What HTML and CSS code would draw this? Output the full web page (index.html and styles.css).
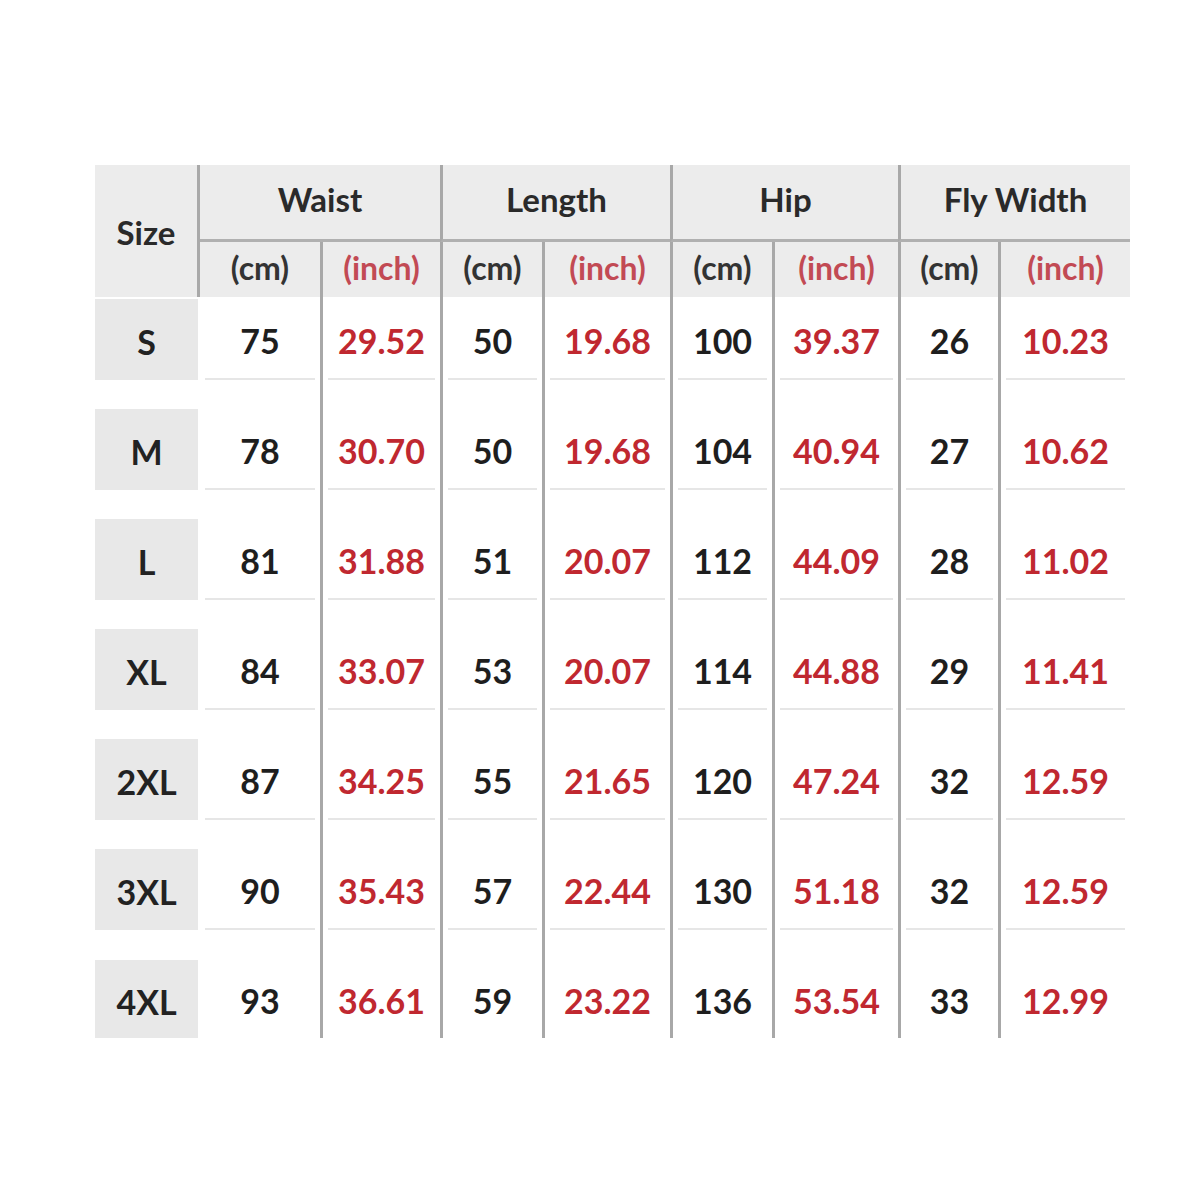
FILE: index.html
```html
<!DOCTYPE html>
<html>
<head>
<meta charset="utf-8">
<link rel="stylesheet" href="styles.css">
</head>
<body>
<div class="chart">
  <div class="head">
    <div class="h-size">Size</div>
    <div class="h-group">Waist</div>
    <div class="h-group div">Length</div>
    <div class="h-group div">Hip</div>
    <div class="h-group div">Fly Width</div>
    <div class="h-sub">(cm)</div>
    <div class="h-sub in div">(inch)</div>
    <div class="h-sub div">(cm)</div>
    <div class="h-sub in div">(inch)</div>
    <div class="h-sub div">(cm)</div>
    <div class="h-sub in div">(inch)</div>
    <div class="h-sub div">(cm)</div>
    <div class="h-sub in div">(inch)</div>
  </div>
  <div class="body">
    <div class="row first">
      <div class="c sz"><span>S</span></div>
      <div class="c"><span>75</span></div><div class="c r div"><span>29.52</span></div>
      <div class="c div"><span>50</span></div><div class="c r div"><span>19.68</span></div>
      <div class="c div"><span>100</span></div><div class="c r div"><span>39.37</span></div>
      <div class="c div"><span>26</span></div><div class="c r div"><span>10.23</span></div>
    </div>
    <div class="row">
      <div class="c sz"><span>M</span></div>
      <div class="c"><span>78</span></div><div class="c r div"><span>30.70</span></div>
      <div class="c div"><span>50</span></div><div class="c r div"><span>19.68</span></div>
      <div class="c div"><span>104</span></div><div class="c r div"><span>40.94</span></div>
      <div class="c div"><span>27</span></div><div class="c r div"><span>10.62</span></div>
    </div>
    <div class="row">
      <div class="c sz"><span>L</span></div>
      <div class="c"><span>81</span></div><div class="c r div"><span>31.88</span></div>
      <div class="c div"><span>51</span></div><div class="c r div"><span>20.07</span></div>
      <div class="c div"><span>112</span></div><div class="c r div"><span>44.09</span></div>
      <div class="c div"><span>28</span></div><div class="c r div"><span>11.02</span></div>
    </div>
    <div class="row">
      <div class="c sz"><span>XL</span></div>
      <div class="c"><span>84</span></div><div class="c r div"><span>33.07</span></div>
      <div class="c div"><span>53</span></div><div class="c r div"><span>20.07</span></div>
      <div class="c div"><span>114</span></div><div class="c r div"><span>44.88</span></div>
      <div class="c div"><span>29</span></div><div class="c r div"><span>11.41</span></div>
    </div>
    <div class="row">
      <div class="c sz"><span>2XL</span></div>
      <div class="c"><span>87</span></div><div class="c r div"><span>34.25</span></div>
      <div class="c div"><span>55</span></div><div class="c r div"><span>21.65</span></div>
      <div class="c div"><span>120</span></div><div class="c r div"><span>47.24</span></div>
      <div class="c div"><span>32</span></div><div class="c r div"><span>12.59</span></div>
    </div>
    <div class="row">
      <div class="c sz"><span>3XL</span></div>
      <div class="c"><span>90</span></div><div class="c r div"><span>35.43</span></div>
      <div class="c div"><span>57</span></div><div class="c r div"><span>22.44</span></div>
      <div class="c div"><span>130</span></div><div class="c r div"><span>51.18</span></div>
      <div class="c div"><span>32</span></div><div class="c r div"><span>12.59</span></div>
    </div>
    <div class="row last">
      <div class="c sz"><span>4XL</span></div>
      <div class="c"><span>93</span></div><div class="c r div"><span>36.61</span></div>
      <div class="c div"><span>59</span></div><div class="c r div"><span>23.22</span></div>
      <div class="c div"><span>136</span></div><div class="c r div"><span>53.54</span></div>
      <div class="c div"><span>33</span></div><div class="c r div"><span>12.99</span></div>
    </div>
  </div>
</div>
</body>
</html>
```
FILE: styles.css
```css
* { box-sizing: border-box; }
html, body { margin: 0; padding: 0; background: #fff; }
body { font-family: Lato, "Open Sans", sans-serif; font-weight: 700; color: #222; }

.chart {
  width: 1035px;
  margin: 165px 0 0 95px;
}

.head, .row {
  display: grid;
  grid-template-columns: 105px 120px 120px 102px 128px 102px 126px 100px 132px;
}

.head {
  grid-template-rows: 77px 55px;
  background: #ececec;
}

.h-size {
  grid-row: 1 / span 2;
  grid-column: 1;
  border-right: 3px solid #a9a9a9;
  display: flex;
  align-items: center;
  justify-content: center;
  padding-top: 2px;
  font-size: 33px;
  color: #2a2a2a;
}

.h-group {
  grid-column: span 2;
  border-bottom: 3px solid #b0b0b0;
  display: flex;
  align-items: center;
  justify-content: center;
  font-size: 33px;
  color: #2a2a2a;
  padding-bottom: 6px;
}

.h-sub {
  display: flex;
  align-items: center;
  justify-content: center;
  font-size: 32px;
  color: #333;
  padding-bottom: 4px;
}
.h-sub.in { color: #c24a54; }

.div { border-left: 3px solid #a8a8a8; }

.row { height: 110px; }
.row.first { height: 83px; }

.c {
  display: flex;
  flex-direction: column;
  justify-content: flex-end;
}
.c span {
  height: 81px;
  display: flex;
  align-items: center;
  justify-content: center;
  margin: 0 5px;
  padding-top: 4px;
  border-bottom: 2px solid #e6e6e6;
  font-size: 34px;
  color: #1e1e1e;
}
.c.r span { color: #c02830; }
.c.sz span {
  margin: 0 2px 0 0;
  border-bottom: 0;
  background: #e8e8e8;
  color: #222;
}
.row.last .c span { border-bottom-color: transparent; height: 78px; }
.row.last { height: 108px; }
```
